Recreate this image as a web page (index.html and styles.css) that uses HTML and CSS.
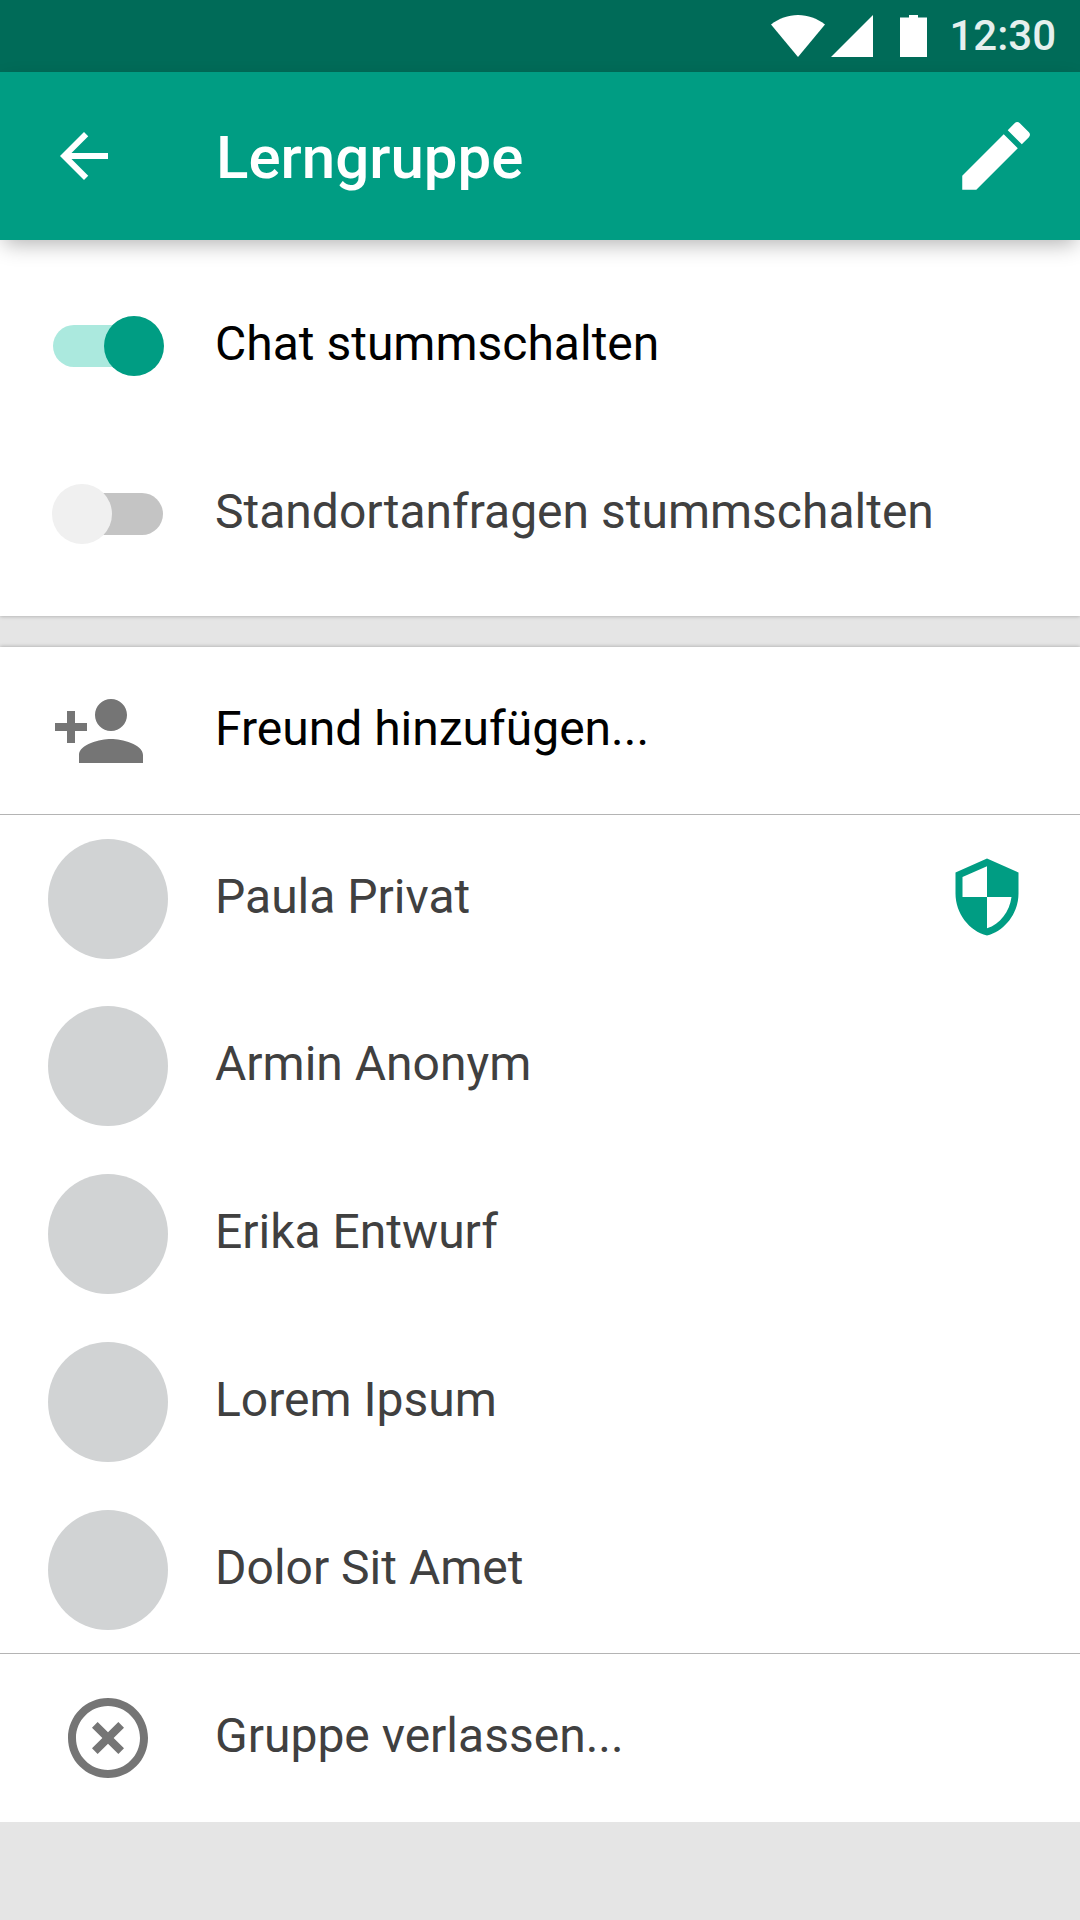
FILE: index.html
```html
<!DOCTYPE html>
<html lang="de">
<head>
<meta charset="utf-8">
<meta name="viewport" content="width=device-width, initial-scale=1">
<title>Lerngruppe</title>
<link rel="stylesheet" href="styles.css">
</head>
<body>
<div class="status-bar">
  <svg class="status-signals" viewBox="0 0 156 42" aria-hidden="true">
    <path d="M0 9.500C8 3.500 17 0 27 0s19 3.500 27 9.500L27 42z"/>
    <path d="M60 42L102 0v42z"/>
    <path d="M129 2.500h9V0h9v2.500h9V42h-27z"/>
  </svg>
  <time class="clock">12:30</time>
</div>
<header class="app-bar">
  <button class="icon-button" type="button" aria-label="Zurück">
    <svg class="icon-back" viewBox="0 0 24 24"><path d="M20 11H7.830l5.590-5.590L12 4l-8 8 8 8 1.410-1.410L7.830 13H20z"/></svg>
  </button>
  <h1 class="title">Lerngruppe</h1>
  <button class="icon-button" type="button" aria-label="Bearbeiten">
    <svg class="icon-edit" viewBox="0 0 24 24"><path d="M3 17.250V21h3.750L17.810 9.940l-3.750-3.750zM20.710 7.040a1 1 0 0 0 0-1.410l-2.340-2.340a1 1 0 0 0-1.410 0l-1.830 1.830 3.750 3.750z"/></svg>
  </button>
</header>
<main>
  <section class="card settings">
    <label class="row strong">
      <span class="lead"><input class="switch" type="checkbox" role="switch" checked></span>
      <span class="text">Chat stummschalten</span>
    </label>
    <label class="row">
      <span class="lead"><input class="switch" type="checkbox" role="switch"></span>
      <span class="text">Standortanfragen stummschalten</span>
    </label>
  </section>
  <section class="card">
    <button class="row add strong" type="button">
      <span class="lead lead-add"><svg class="icon" viewBox="0 0 24 24"><path d="M15 12c2.210 0 4-1.790 4-4s-1.790-4-4-4-4 1.790-4 4 1.790 4 4 4zm-9-2V7H4v3H1v2h3v3h2v-3h3v-2zm9 4c-2.670 0-8 1.340-8 4v2h16v-2c0-2.660-5.330-4-8-4z"/></svg></span>
      <span class="text">Freund hinzufügen...</span>
    </button>
    <ul class="members">
      <li class="row">
        <span class="lead"><span class="avatar"></span></span>
        <span class="text">Paula Privat</span>
        <svg class="icon-admin" viewBox="0 0 24 24" role="img" aria-label="Administrator"><path d="M12 1L3 5v6c0 5.550 3.840 10.740 9 12 5.160-1.260 9-6.450 9-12V5zm0 10.990h7c-.53 4.120-3.280 7.790-7 8.940V12H5V6.300l7-3.110z"/></svg>
      </li>
      <li class="row"><span class="lead"><span class="avatar"></span></span><span class="text">Armin Anonym</span></li>
      <li class="row"><span class="lead"><span class="avatar"></span></span><span class="text">Erika Entwurf</span></li>
      <li class="row"><span class="lead"><span class="avatar"></span></span><span class="text">Lorem Ipsum</span></li>
      <li class="row"><span class="lead"><span class="avatar"></span></span><span class="text">Dolor Sit Amet</span></li>
    </ul>
    <button class="row" type="button">
      <span class="lead"><svg class="icon" viewBox="0 0 24 24"><path d="M14.590 8L12 10.590 9.410 8 8 9.410 10.590 12 8 14.590 9.410 16 12 13.410 14.590 16 16 14.590 13.410 12 16 9.410zM12 2C6.470 2 2 6.470 2 12s4.470 10 10 10 10-4.470 10-10S17.530 2 12 2zm0 18c-4.410 0-8-3.590-8-8s3.590-8 8-8 8 3.590 8 8-3.590 8-8 8z"/></svg></span>
      <span class="text">Gruppe verlassen...</span>
    </button>
  </section>
</main>
</body>
</html>
```
FILE: styles.css
```css
:root {
  --primary: #009d83;
  --primary-dark: #006b58;
  --line: #b4b4b4;
}

*, *::before, *::after {
  box-sizing: border-box;
}

body {
  margin: 0;
  background: #e5e5e5;
  color: #404040;
  font: 400 48px/56px Roboto, sans-serif;
}

button {
  padding: 0;
  border: 0;
  background: none;
  color: inherit;
  font: inherit;
  text-align: left;
  cursor: pointer;
}

svg {
  display: block;
  flex: none;
}

/* Status bar */
.status-bar {
  display: flex;
  align-items: center;
  justify-content: flex-end;
  gap: 22px;
  height: 72px;
  padding-right: 24px;
  background: var(--primary-dark);
}

.status-signals {
  width: 156px;
  height: 42px;
  fill: #fff;
}

.clock {
  color: #e5f0ee;
  font-size: 42px;
  font-weight: 500;
}

/* App bar */
.app-bar {
  position: relative;
  display: flex;
  align-items: center;
  height: 168px;
  padding: 0 39px 0 48px;
  background: var(--primary);
  box-shadow: 0 8px 20px -4px rgba(0, 0, 0, 0.3);
  color: #fff;
}

.icon-button svg {
  fill: currentColor;
}

.icon-back {
  width: 72px;
  height: 72px;
}

.icon-edit {
  width: 90px;
  height: 90px;
}

.title {
  flex: 1;
  margin: 0;
  padding: 4px 0 0 96px;
  font-size: 60px;
  font-weight: 500;
}

/* Cards and rows */
.card {
  background: #fff;
  box-shadow: 0 0 4px rgba(0, 0, 0, 0.3);
}

.card + .card {
  margin-top: 31px;
}

.settings {
  padding: 22px 0 18px;
}

.row {
  display: flex;
  align-items: center;
  width: 100%;
  min-height: 168px;
  padding: 0 51px 0 48px;
}

.add {
  min-height: 167px;
}

.strong {
  color: #000;
}

.lead {
  display: flex;
  flex: none;
  justify-content: center;
  width: 120px;
  margin-right: 47px;
}

.lead-add {
  justify-content: flex-start;
  padding-left: 3px;
}

.text {
  flex: 1;
}

.text,
.icon-admin {
  margin-bottom: 4px;
}

.icon {
  width: 96px;
  height: 96px;
  fill: #757575;
}

.icon-admin {
  width: 84px;
  height: 84px;
  fill: var(--primary);
}

.avatar {
  width: 120px;
  height: 120px;
  border-radius: 50%;
  background: #d1d3d4;
}

.members {
  margin: 0;
  padding: 0;
  list-style: none;
}

.members .row:first-child {
  border-top: 1px solid var(--line);
}

.members .row:last-child {
  border-bottom: 1px solid var(--line);
}

/* Switch: track and thumb share one grid cell */
.switch {
  appearance: none;
  display: grid;
  align-items: center;
  width: 112px;
  height: 60px;
  margin: 0;
  cursor: pointer;
}

.switch::before,
.switch::after {
  content: "";
  grid-area: 1 / 1;
}

.switch::before {
  height: 42px;
  margin: 0 1px;
  border-radius: 21px;
  background: #c4c4c4;
}

.switch::after {
  width: 60px;
  height: 60px;
  border-radius: 50%;
  background: #f0f0f0;
}

.switch:checked::before {
  background: #abe9de;
}

.switch:checked::after {
  justify-self: end;
  background: var(--primary);
}
```
